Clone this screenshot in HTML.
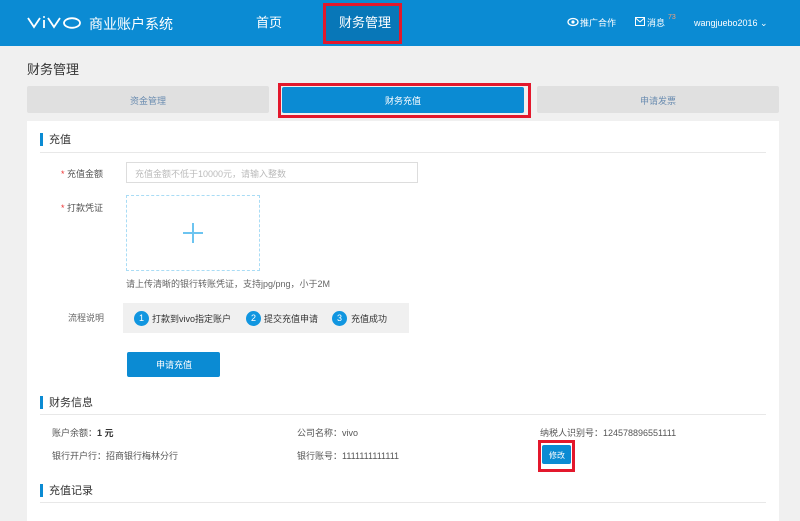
<!DOCTYPE html>
<html><head><meta charset="utf-8"><style>
*{margin:0;padding:0;box-sizing:border-box}
body{width:800px;height:508px;overflow:hidden;background:#f0f0f0;font-family:"Liberation Sans","Noto Sans CJK SC",sans-serif;color:#333;position:relative}
.a{position:absolute;white-space:nowrap;line-height:1.45}
div.a:not(.c){padding-top:2px}
.hd{position:absolute;left:0;top:0;width:800px;height:46px;background:#0b8bd3}
.w{color:#fff}
.sec{position:absolute;left:40px;width:3px;height:13px;background:#0b8bd3}
.line{position:absolute;left:40px;width:726px;height:1px;background:#e8e8e8}
.f11{font-size:11px}.f9{font-size:9px}
.c{width:15px;height:15px;border-radius:50%;background:#1196e0;color:#fff;font-size:9px;text-align:center;line-height:15px}
</style></head><body>
<div class="hd"></div>
<svg class="a" style="left:27px;top:15px" width="56" height="14" viewBox="0 0 56 14"><g fill="none" stroke="#fff" stroke-width="1.8"><path d="M1 3l6 9 6-9"/><path d="M17 5v8"/><path d="M21 3l6 9 6-9"/><ellipse cx="45" cy="8" rx="8" ry="4.8"/></g><circle cx="17" cy="2" r="1" fill="#fff"/></svg>
<div class="a w" style="left:89px;top:12px;font-size:14px">商业账户系统</div>
<div class="a w" style="left:256px;top:12px;font-size:13px">首页</div>
<div class="a" style="left:323px;top:3px;width:79px;height:41px;background:#0877b8;border:3px solid #e3182c;padding:0"></div>
<div class="a w" style="left:339px;top:12px;font-size:13px">财务管理</div>
<svg class="a" style="left:567px;top:17px" width="12" height="10"><ellipse cx="6" cy="5" rx="5" ry="3.5" fill="none" stroke="#fff" stroke-width="1.3"/><circle cx="6" cy="5" r="1.6" fill="#fff"/></svg>
<div class="a w f9" style="left:580px;top:15px">推广合作</div>
<svg class="a" style="left:635px;top:17px" width="10" height="9"><rect x=".5" y=".5" width="9" height="8" fill="none" stroke="#fff"/><path d="M.5 1l4.5 4 4.5-4" fill="none" stroke="#fff"/></svg>
<div class="a w f9" style="left:647px;top:15px">消息</div>
<div class="a" style="left:668px;top:11px;font-size:7px;color:#f5a07a">73</div>
<div class="a w f9" style="left:694px;top:15px">wangjuebo2016 ⌄</div>
<div class="a" style="left:27px;top:59px;font-size:13px;color:#333">财务管理</div>
<div class="a" style="left:27px;top:86px;width:242px;height:27px;background:#e0e0e0;border-radius:2px"></div>
<div class="a f9" style="left:130px;top:93px;color:#6a8cb0">资金管理</div>
<div class="a" style="left:278px;top:83px;width:253px;height:35px;border:3px solid #e3182c;padding:0"></div>
<div class="a" style="left:282px;top:87px;width:242px;height:26px;background:#0b8bd3;border-radius:2px"></div>
<div class="a w f9" style="left:385px;top:93px">财务充值</div>
<div class="a" style="left:537px;top:86px;width:242px;height:27px;background:#e0e0e0;border-radius:2px"></div>
<div class="a f9" style="left:640px;top:93px;color:#6a8cb0">申请发票</div>
<div class="a" style="left:27px;top:121px;width:752px;height:400px;background:#fff"></div>
<div class="sec" style="top:133px"></div><div class="a f11" style="left:49px;top:131px">充值</div>
<div class="line" style="top:152px"></div>
<div class="a f9" style="left:61px;top:166px;color:#555"><span style="color:#e33">*</span> 充值金额</div>
<div class="a" style="left:126px;top:162px;width:292px;height:21px;border:1px solid #ddd"></div>
<div class="a f9" style="left:135px;top:166px;color:#bbb">充值金额不低于10000元，请输入整数</div>
<div class="a f9" style="left:61px;top:200px;color:#555"><span style="color:#e33">*</span> 打款凭证</div>
<div class="a" style="left:126px;top:195px;width:134px;height:76px;border:1px dashed #a9dcf5"></div>
<div class="a" style="left:183px;top:232px;width:20px;height:2px;background:#6cc4f0;padding:0"></div>
<div class="a" style="left:192px;top:223px;width:2px;height:20px;background:#6cc4f0"></div>
<div class="a f9" style="left:126px;top:276px;color:#666">请上传清晰的银行转账凭证，支持jpg/png，小于2M</div>
<div class="a f9" style="left:68px;top:310px;color:#666">流程说明</div>
<div class="a" style="left:123px;top:303px;width:286px;height:30px;background:#f0f0f0"></div>
<div class="a c" style="left:134px;top:311px">1</div><div class="a f9" style="left:152px;top:311px">打款到vivo指定账户</div>
<div class="a c" style="left:246px;top:311px">2</div><div class="a f9" style="left:264px;top:311px">提交充值申请</div>
<div class="a c" style="left:332px;top:311px">3</div><div class="a f9" style="left:351px;top:311px">充值成功</div>
<div class="a" style="left:127px;top:352px;width:93px;height:25px;background:#0b8bd3;border-radius:2px"></div>
<div class="a w f9" style="left:156px;top:357px">申请充值</div>
<div class="sec" style="top:396px"></div><div class="a f11" style="left:49px;top:394px">财务信息</div>
<div class="line" style="top:414px"></div>
<div class="a f9" style="left:52px;top:425px;color:#555">账户余额：<b style="color:#333">1 元</b></div>
<div class="a f9" style="left:297px;top:425px;color:#555">公司名称：vivo</div>
<div class="a f9" style="left:540px;top:425px;color:#555">纳税人识别号：124578896551111</div>
<div class="a f9" style="left:52px;top:448px;color:#555">银行开户行：招商银行梅林分行</div>
<div class="a f9" style="left:297px;top:448px;color:#555">银行账号：1111111111111</div>
<div class="a" style="left:538px;top:440px;width:37px;height:32px;border:3px solid #e3182c;padding:0"></div>
<div class="a" style="left:542px;top:445px;width:29px;height:19px;background:#0b8bd3;border-radius:2px"></div>
<div class="a w" style="left:549px;top:448px;font-size:8px">修改</div>
<div class="sec" style="top:484px"></div><div class="a f11" style="left:49px;top:482px">充值记录</div>
<div class="line" style="top:502px"></div>
</body></html>
